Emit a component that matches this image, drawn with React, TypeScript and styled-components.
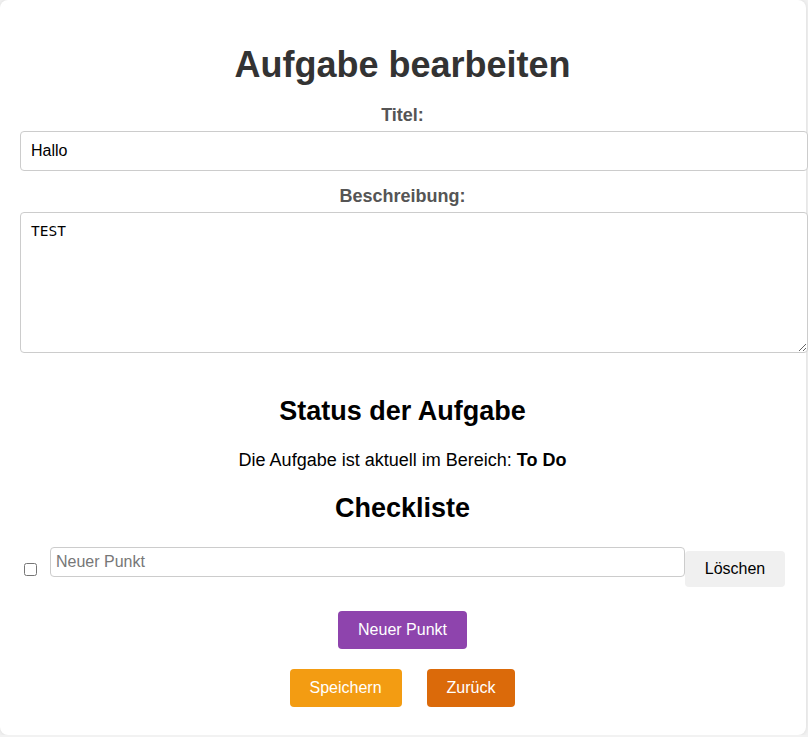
import React, { useState } from "react";
import styled, { createGlobalStyle } from "styled-components";

type Item = { id: number; text: string; done: boolean };

export default function App() {
  const [title, setTitle] = useState("Hallo");
  const [description, setDescription] = useState("TEST");
  const [items, setItems] = useState<Item[]>([{ id: 1, text: "", done: false }]);

  const addItem = () => {
    setItems([...items, { id: Date.now(), text: "", done: false }]);
  };

  const removeItem = (id: number) => {
    setItems(items.filter((i) => i.id !== id));
  };

  const updateItem = (id: number, patch: Partial<Item>) => {
    setItems(items.map((i) => (i.id === id ? { ...i, ...patch } : i)));
  };

  return (
    <>
      <GlobalStyle />
      <Card>
        <Title>Aufgabe bearbeiten</Title>

        <Label htmlFor="title">Titel:</Label>
        <TextInput id="title" value={title} onChange={(e) => setTitle(e.target.value)} />

        <Label htmlFor="desc" $top={15}>Beschreibung:</Label>
        <TextArea id="desc" value={description} onChange={(e) => setDescription(e.target.value)} />

        <SectionTitle $top={43}>Status der Aufgabe</SectionTitle>
        <StatusText>
          Die Aufgabe ist aktuell im Bereich: <strong>To Do</strong>
        </StatusText>

        <SectionTitle $top={22}>Checkliste</SectionTitle>
        <CheckList>
          {items.map((item) => (
            <CheckRow key={item.id}>
              <CheckBox
                type="checkbox"
                checked={item.done}
                onChange={(e) => updateItem(item.id, { done: e.target.checked })}
              />
              <ItemInput
                placeholder="Neuer Punkt"
                value={item.text}
                onChange={(e) => updateItem(item.id, { text: e.target.value })}
              />
              <DeleteButton onClick={() => removeItem(item.id)}>Löschen</DeleteButton>
            </CheckRow>
          ))}
        </CheckList>

        <ButtonRow $top={24}>
          <ActionButton $bg="#8e44ad" onClick={addItem}>Neuer Punkt</ActionButton>
        </ButtonRow>
        <ButtonRow $top={20}>
          <ActionButton $bg="#f39c12">Speichern</ActionButton>
          <ActionButton $bg="#db6a0a">Zurück</ActionButton>
        </ButtonRow>
      </Card>
    </>
  );
}

// styled Components
const GlobalStyle = createGlobalStyle`
  html, body {
    margin: 0;
    padding: 0;
    background: #f2f2f2;
    font-family: "Liberation Sans", Arial, sans-serif;
  }
`;

const Card = styled.div`
  box-sizing: border-box;
  width: 806px;
  height: 735px;
  padding: 44px 21px 28px 20px;
  background: #fff;
  border-radius: 8px;
  box-shadow: 0 0 5px rgba(0, 0, 0, 0.1);
`;

const Title = styled.h1`
  margin: 0 0 19px;
  text-align: center;
  font-size: 36px;
  font-weight: bold;
  color: #333;
`;

const Label = styled.label<{ $top?: number }>`
  display: block;
  margin: ${(p) => p.$top ?? 0}px 0 5px;
  text-align: center;
  font-size: 18px;
  font-weight: bold;
  color: #555;
`;

const TextInput = styled.input`
  display: block;
  width: calc(100% + 1px);
  margin: 0;
  padding: 10px;
  border: 1px solid #ccc;
  border-radius: 4px;
  font-family: "Liberation Sans", Arial, sans-serif;
  font-size: 16px;
  color: #000;
  outline: none;
`;

const TextArea = styled.textarea`
  display: block;
  width: calc(100% + 1px);
  height: 119px;
  margin: 0;
  padding: 10px;
  border: 1px solid #ccc;
  border-radius: 4px;
  font-family: "DejaVu Sans Mono", monospace;
  font-size: 14.5px;
  color: #000;
  outline: none;
`;

const SectionTitle = styled.h2<{ $top: number }>`
  margin: ${(p) => p.$top}px 0 23px;
  text-align: center;
  font-size: 27px;
  font-weight: bold;
  color: #000;
`;

const StatusText = styled.p`
  margin: 0;
  text-align: center;
  font-size: 18px;
  color: #000;
`;

const CheckList = styled.ul`
  list-style: none;
  margin: 0;
  padding: 0;
`;

const CheckRow = styled.li`
  display: flex;
  align-items: flex-start;
`;

const CheckBox = styled.input`
  width: 13px;
  height: 13px;
  margin: 16px 13px 0 4px;
`;

const ItemInput = styled.input`
  flex: 1;
  min-width: 0;
  margin: 0;
  padding: 5px;
  border: 1px solid #ccc;
  border-radius: 4px;
  font-family: "Liberation Sans", Arial, sans-serif;
  font-size: 16px;
  color: #000;
  outline: none;

  &::placeholder {
    color: #777;
  }
`;

const DeleteButton = styled.button`
  flex: none;
  width: 100px;
  margin-top: 4px;
  padding: 9px 0;
  border: none;
  border-radius: 4px;
  background: #f0f0f0;
  font-family: "Liberation Sans", Arial, sans-serif;
  font-size: 16px;
  color: #000;
  cursor: pointer;
`;

const ButtonRow = styled.div<{ $top: number }>`
  display: flex;
  justify-content: center;
  gap: 25px;
  margin-top: ${(p) => p.$top}px;
`;

const ActionButton = styled.button<{ $bg: string }>`
  padding: 10px 20px;
  border: none;
  border-radius: 4px;
  background: ${(p) => p.$bg};
  font-family: "Liberation Sans", Arial, sans-serif;
  font-size: 16px;
  color: #fff;
  cursor: pointer;
`;
